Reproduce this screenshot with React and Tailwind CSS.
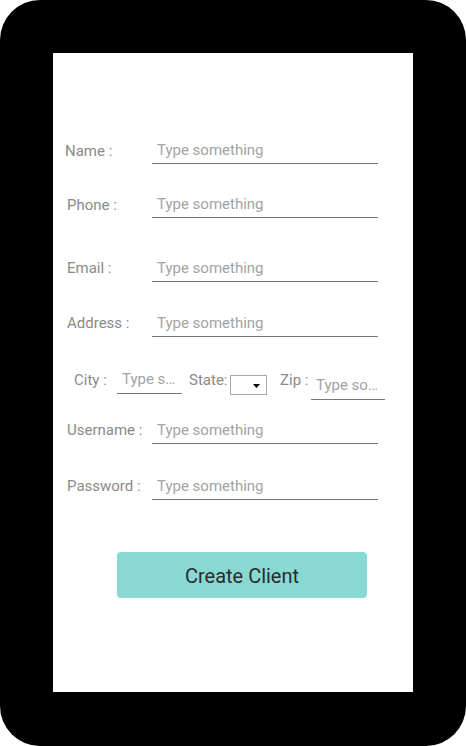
import React from 'react'

const font = { fontFamily: 'Roboto, "Liberation Sans", sans-serif' }

function Field({ label, pl = 'pl-[14px] w-[99px]', lift = false, className = '' }) {
  return (
    <div className={`flex items-center ${className}`}>
      <label className={`shrink-0 text-[15px] text-[#8a8a8a] ${pl} ${lift ? 'pb-[2px]' : ''}`}>{label}</label>
      <input
        placeholder="Type something"
        className="w-[226px] h-[26px] border-b border-[#777] pl-[5px] pb-[2px] text-[15px] outline-none placeholder:text-[#a3a3a3]"
      />
    </div>
  )
}

export default function App() {
  return (
    <div className="w-[466px] h-[746px] bg-white" style={font}>
      <div className="h-full rounded-[40px] bg-black p-[53px] pb-[54px]">
        <div className="h-[639px] bg-white pt-[85px]">
          <Field label="Name :" pl="pl-[12px] w-[99px]" />
          <Field label="Phone :" className="mt-[28px]" />
          <Field label="Email :" lift className="mt-[38px]" />
          <Field label="Address :" lift className="mt-[29px]" />

          {/* city / state / zip */}
          <div className="flex items-start mt-[30px] pl-[21px]">
            <span className="w-[43px] h-[26px] flex items-center text-[15px] text-[#8a8a8a]">City :</span>
            <input
              placeholder="Type something"
              className="w-[65px] h-[27px] border-b border-[#777] pl-[5px] pb-[2px] text-[15px] outline-none text-ellipsis placeholder:text-[#a3a3a3]"
            />
            <span className="ml-[7px] w-[41px] h-[26px] flex items-center text-[15px] text-[#8a8a8a]">State:</span>
            <div className="relative mt-[8px] w-[37px] h-[20px]">
              <select className="w-full h-full appearance-none border border-[#a9a9a9] bg-white outline-none" />
              <svg className="absolute left-[23px] top-[9px] pointer-events-none" width="7" height="4" viewBox="0 0 7 4">
                <path d="M0 0h7L3.5 4z" fill="#000" />
              </svg>
            </div>
            <span className="ml-[13px] w-[31px] h-[26px] flex items-center text-[15px] text-[#8a8a8a]">Zip :</span>
            <input
              placeholder="Type something"
              className="mt-[7px] w-[74px] h-[26px] border-b border-[#777] pl-[5px] pb-[3px] text-[15px] outline-none text-ellipsis placeholder:text-[#a3a3a3]"
            />
          </div>

          <Field label="Username :" lift className="mt-[18px]" />
          <Field label="Password :" lift className="mt-[30px]" />

          <div className="mt-[52px] pl-[64px]">
            <button className="w-[250px] h-[46px] rounded-[4px] bg-[#88d9d3] pt-[2px] text-[20px] text-[#2b2b2b]">
              Create Client
            </button>
          </div>
        </div>
      </div>
    </div>
  )
}
